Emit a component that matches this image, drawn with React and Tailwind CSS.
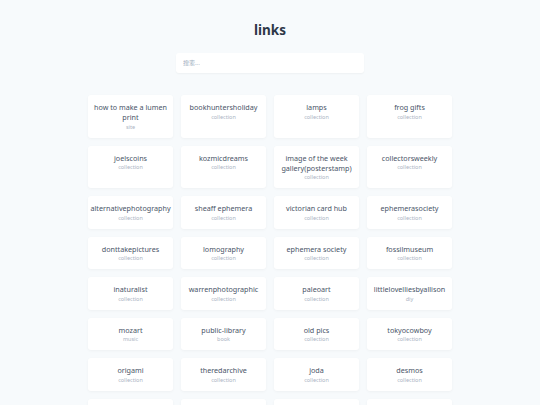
const links = [
  { title: "how to make a lumen print", kind: "site" },
  { title: "bookhuntersholiday", kind: "collection" },
  { title: "lamps", kind: "collection" },
  { title: "frog gifts", kind: "collection" },
  { title: "joelscoins", kind: "collection" },
  { title: "kozmicdreams", kind: "collection" },
  { title: "image of the week gallery(posterstamp)", kind: "collection" },
  { title: "collectorsweekly", kind: "collection" },
  { title: "alternativephotography", kind: "collection" },
  { title: "sheaff ephemera", kind: "collection" },
  { title: "victorian card hub", kind: "collection" },
  { title: "ephemerasociety", kind: "collection" },
  { title: "donttakepictures", kind: "collection" },
  { title: "lomography", kind: "collection" },
  { title: "ephemera society", kind: "collection" },
  { title: "fossilmuseum", kind: "collection" },
  { title: "inaturalist", kind: "collection" },
  { title: "warrenphotographic", kind: "collection" },
  { title: "paleoart", kind: "collection" },
  { title: "littlelovelliesbyallison", kind: "diy" },
  { title: "mozart", kind: "music" },
  { title: "public-library", kind: "book" },
  { title: "old pics", kind: "collection" },
  { title: "tokyocowboy", kind: "collection" },
  { title: "origami", kind: "collection" },
  { title: "theredarchive", kind: "collection" },
  { title: "joda", kind: "collection" },
  { title: "desmos", kind: "collection" },
  { title: "archive", kind: "collection" },
  { title: "postcards", kind: "collection" },
  { title: "maps", kind: "collection" },
  { title: "stamps", kind: "collection" },
];

export default function App() {
  return (
    <div
      className="min-h-screen bg-[#f7fafc] pt-[20px] pb-8 antialiased"
      style={{ fontFamily: '"Noto Sans", "Noto Sans CJK SC", sans-serif' }}
    >
      <h1 className="text-center text-[13.5px] leading-[20px] font-bold text-[#2d3748]">links</h1>

      {/* search */}
      <div className="mt-[13px] flex justify-center">
        <input
          type="text"
          placeholder="搜索..."
          className="w-[188px] h-[20px] rounded-[3px] bg-white px-[7px] text-[6px] text-[#4a5568] placeholder:text-[#a0aec0] shadow-[0_1px_2px_rgba(0,0,0,0.04)] outline-none"
        />
      </div>

      {/* link cards */}
      <div className="mx-auto mt-[22px] grid w-[364px] grid-cols-4 gap-[8px]">
        {links.map((link, i) => (
          <a
            key={i}
            href="#"
            className="flex flex-col items-center rounded-[3px] bg-white px-[4px] py-[7px] text-center shadow-[0_1px_3px_rgba(0,0,0,0.04)]"
          >
            <span className="text-[7.2px] leading-[10px] text-[#4a5568]">{link.title}</span>
            <span className="mt-[1.5px] text-[5.5px] leading-[7px] text-[#aab4c3]">{link.kind}</span>
          </a>
        ))}
      </div>
    </div>
  );
}
